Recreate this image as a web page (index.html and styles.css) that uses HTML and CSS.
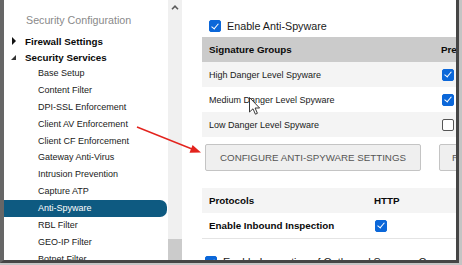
FILE: index.html
```html
<!DOCTYPE html>
<html lang="en">
<head>
    <meta charset="UTF-8">
    <meta name="viewport" content="width=device-width, initial-scale=1.0">
    <title>Anti-Spyware</title>
    <link rel="stylesheet" href="styles.css">
</head>
<body>
    <div class="window">
        <aside class="sidebar">
            <div class="nav-title">Security Configuration</div>
            <ul class="tree">
                <li class="group"><span class="caret closed"></span>Firewall Settings</li>
                <li class="group"><span class="caret open"></span>Security Services</li>
                <li class="item">Base Setup</li>
                <li class="item">Content Filter</li>
                <li class="item">DPI-SSL Enforcement</li>
                <li class="item">Client AV Enforcement</li>
                <li class="item">Client CF Enforcement</li>
                <li class="item">Gateway Anti-Virus</li>
                <li class="item">Intrusion Prevention</li>
                <li class="item">Capture ATP</li>
                <li class="item selected">Anti-Spyware</li>
                <li class="item">RBL Filter</li>
                <li class="item">GEO-IP Filter</li>
                <li class="item">Botnet Filter</li>
            </ul>
        </aside>
        <div class="scrollbar">
            <svg class="scroll-up" width="8" height="5" viewBox="0 0 8 5">
                <path d="M1 4.2 L4 1.2 L7 4.2" fill="none" stroke="#5a5a5a" stroke-width="1.6"/>
            </svg>
            <div class="thumb"></div>
        </div>
        <main class="content">
            <div class="check-row first">
                <span class="cb checked"></span>
                <span>Enable Anti-Spyware</span>
            </div>

            <table class="grid groups">
                <tr class="head">
                    <th class="col-name">Signature Groups</th>
                    <th class="col-opt">Prevent</th>
                </tr>
                <tr class="shade">
                    <td>High Danger Level Spyware</td>
                    <td class="col-opt"><span class="cb checked"></span></td>
                </tr>
                <tr>
                    <td>Medium Danger Level Spyware</td>
                    <td class="col-opt"><span class="cb checked"></span></td>
                </tr>
                <tr class="shade">
                    <td>Low Danger Level Spyware</td>
                    <td class="col-opt"><span class="cb"></span></td>
                </tr>
            </table>

            <div class="actions">
                <button class="btn wide">CONFIGURE ANTI-SPYWARE SETTINGS</button>
                <button class="btn">RESET</button>
            </div>

            <table class="grid protocols">
                <tr class="head light">
                    <th class="col-name">Protocols</th>
                    <th class="col-opt">HTTP</th>
                </tr>
                <tr class="line">
                    <th class="col-name">Enable Inbound Inspection</th>
                    <td class="col-opt"><span class="cb checked"></span></td>
                </tr>
            </table>

            <div class="check-row last">
                <span class="cb checked"></span>
                <span>Enable Inspection of Outbound Spyware Communication</span>
            </div>
        </main>
    </div>

    <!-- annotation arrow and mouse pointer drawn over the screenshot -->
    <svg class="overlay" width="462" height="265" viewBox="0 0 462 265">
        <line x1="137" y1="127" x2="192" y2="149" stroke="#e3231d" stroke-width="1.5"/>
        <polygon points="201,152.5 189.5,152.8 192.6,145" fill="#e3231d"/>
        <path d="M249.5 97.5 L249.5 112 L253 108.8 L255.4 114.2 L257.4 113.3 L255.1 108 L259.6 108 Z"
              fill="#fff" stroke="#222" stroke-width="0.9" stroke-linejoin="round"/>
    </svg>
</body>
</html>
```

FILE: styles.css
```css
body {
    margin: 0;
    padding: 0;
    background-color: #c4c4c4;
    font-family: "Liberation Sans", Arial, sans-serif;
    color: #111;
    position: relative;
    width: 462px;
    height: 265px;
    overflow: hidden;
}
.window {
    display: flex;
    width: 459px;
    height: 263px;
    box-sizing: border-box;
    border-left: 4px solid #666;
    border-right: 3px solid #454545;
    border-bottom: 3px solid #454545;
    background: white;
    overflow: hidden;
}

/* left navigation */
.sidebar {
    width: 164px;
    flex-shrink: 0;
    padding-top: 10px;
}
.nav-title {
    height: 20px;
    line-height: 20px;
    padding-left: 22px;
    font-size: 10.7px;
    color: #8a8a8a;
    margin-bottom: 3px;
}
.tree {
    list-style: none;
    margin: 0;
    padding: 0;
}
.group {
    display: flex;
    align-items: center;
    height: 16px;
    padding-left: 8px;
    font-size: 9.8px;
    font-weight: bold;
    color: #0a0a0a;
}
.caret {
    width: 13px;
    display: flex;
    align-items: center;
}
.caret.closed::before {
    content: "";
    border-left: 4px solid #111;
    border-top: 4px solid transparent;
    border-bottom: 4px solid transparent;
}
.caret.open::before {
    content: "";
    margin-left: -1px;
    margin-top: 1px;
    border-bottom: 5px solid #333;
    border-left: 5px solid transparent;
}
.item {
    height: 16.9px;
    line-height: 16.9px;
    padding-left: 34px;
    font-size: 9px;
    color: #1a1a1a;
}
.item.selected {
    background: #0e5a81;
    color: white;
    margin-right: 1px;
    border-radius: 0 7px 7px 0;
}

/* scrollbar */
.scrollbar {
    width: 14px;
    flex-shrink: 0;
    background: #f0f0f0;
    display: flex;
    flex-direction: column;
    align-items: center;
}
.scroll-up {
    margin-top: 5px;
}
.thumb {
    margin-top: auto;
    width: 14px;
    height: 21px;
    background: #cbcbcb;
}

/* main panel */
.content {
    flex: 1;
    min-width: 0;
    padding-left: 20px;
    padding-top: 20px;
    overflow: hidden;
}
.check-row {
    display: flex;
    align-items: center;
    gap: 6px;
    height: 12px;
    font-size: 10.75px;
    color: #1a1a1a;
    white-space: nowrap;
}
.check-row.first {
    margin-left: 7px;
    margin-bottom: 5px;
}
.check-row.last {
    margin-left: 3px;
    margin-top: 17px;
}
.cb {
    display: inline-block;
    width: 12px;
    height: 12px;
    box-sizing: border-box;
    border: 1px solid #555;
    border-radius: 2px;
    background: white;
    flex-shrink: 0;
    position: relative;
    vertical-align: middle;
}
.cb.checked {
    background: #0b67d9;
    border-color: #0b67d9;
}
.cb.checked::after {
    content: "";
    position: absolute;
    left: 3px;
    top: 0.5px;
    width: 3px;
    height: 6px;
    border: solid white;
    border-width: 0 1.6px 1.6px 0;
    transform: rotate(40deg);
}

.grid {
    border-collapse: collapse;
    width: 320px;
    table-layout: fixed;
}
.grid th,
.grid td {
    height: 25px;
    padding: 0 0 0 7px;
    text-align: left;
    white-space: nowrap;
    overflow: hidden;
}
.grid th {
    font-size: 9.8px;
    font-weight: bold;
    color: #0a0a0a;
}
.grid td {
    font-size: 9px;
    color: #1a1a1a;
}
.grid .col-opt {
    padding-left: 0;
}
.grid .col-opt .cb {
    margin-left: 1px;
}
.groups .col-name {
    width: 232px;
}
.protocols .col-name {
    width: 165px;
}
.grid .head {
    background: #cbcbcb;
}
.grid .head.light,
.grid .shade {
    background: #f4f4f4;
}
.grid .line th,
.grid .line td {
    border-bottom: 1px solid #e4e4e4;
}

.actions {
    display: flex;
    gap: 18px;
    margin: 7px 0 17px 3px;
}
.btn {
    height: 27px;
    padding: 0 12px;
    flex-shrink: 0;
    background: #efefef;
    border: 1px solid #c4c4c4;
    border-radius: 2px;
    font-family: "Liberation Sans", Arial, sans-serif;
    font-size: 9.75px;
    color: #555;
    white-space: nowrap;
}
.btn.wide {
    width: 216px;
    padding: 0;
}

.overlay {
    position: absolute;
    left: 0;
    top: 0;
    pointer-events: none;
}
```
